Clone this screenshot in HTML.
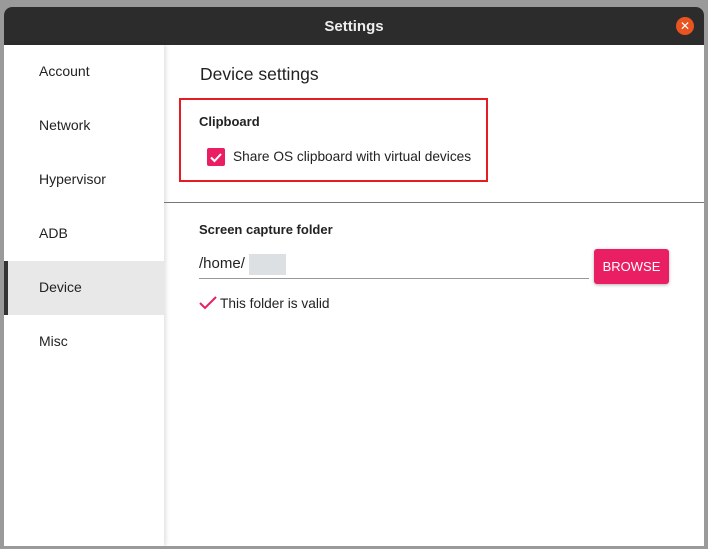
<!DOCTYPE html>
<html><head><style>
*{margin:0;padding:0;box-sizing:border-box}
body{width:708px;height:549px;background:#9a9a9a;font-family:"Liberation Sans",sans-serif;position:relative;overflow:hidden}
.win{position:absolute;left:4px;top:7px;width:700px;height:539px;background:#fff;border-radius:8px 8px 0 0;overflow:hidden}
.tb{position:absolute;left:0;top:0;width:700px;height:38px;background:#2c2c2c;color:#eee;font-weight:bold;font-size:15px;text-align:center;line-height:40px}
.x{position:absolute;left:672px;top:10px;width:18px;height:18px;border-radius:50%;background:#e95420;color:#fff;font-size:12px;line-height:18px;text-align:center;font-weight:normal}
.side{position:absolute;left:0;top:38px;width:160px;height:501px;background:#fff;box-shadow:2px 0 4px rgba(0,0,0,.12)}
.it{position:absolute;left:0;width:160px;height:54px;line-height:52px;padding-left:35px;font-size:14px;color:#222}
.sel{background:#e8e8e8;border-left:4px solid #333;padding-left:31px}
.t{position:absolute;font-size:13.7px;color:#222}
.b{font-weight:bold;font-size:13px}
</style></head><body>
<div class="win">
<div class="tb">Settings<div class="x">✕</div></div>
<div class="side">
<div class="it" style="top:0">Account</div>
<div class="it" style="top:54px">Network</div>
<div class="it" style="top:108px">Hypervisor</div>
<div class="it" style="top:162px">ADB</div>
<div class="it sel" style="top:216px">Device</div>
<div class="it" style="top:270px">Misc</div>
</div>
<div class="t" style="left:196px;top:57px;font-size:17.5px">Device settings</div>
<div style="position:absolute;left:175px;top:91px;width:309px;height:84px;border:2px solid #e51c23"></div>
<div class="t b" style="left:195px;top:107px">Clipboard</div>
<div style="position:absolute;left:203px;top:141px;width:18px;height:18px;background:#e91e63;border-radius:2px"><svg width="18" height="18"><path d="M4 9.5l3.5 3.5 6.5-7" stroke="#fff" stroke-width="2" fill="none"/></svg></div>
<div class="t" style="left:229px;top:142px">Share OS clipboard with virtual devices</div>
<div style="position:absolute;left:160px;top:195px;width:540px;height:1px;background:#777"></div>
<div class="t b" style="left:195px;top:215px">Screen capture folder</div>
<div class="t" style="left:195px;top:248px;font-size:15px">/home/</div>
<div style="position:absolute;left:245px;top:247px;width:37px;height:21px;background:#dde0e3"></div>
<div style="position:absolute;left:195px;top:271px;width:390px;height:1px;background:#999"></div>
<div style="position:absolute;left:590px;top:242px;width:75px;height:35px;background:#e91e63;border-radius:3px;color:#fff;font-size:13px;text-align:center;line-height:35px;box-shadow:0 1px 3px rgba(0,0,0,.3)">BROWSE</div>
<svg style="position:absolute;left:195px;top:289px" width="18" height="14"><path d="M1 7l5 5 11-11" stroke="#e91e63" stroke-width="2" fill="none"/></svg>
<div class="t" style="left:216px;top:289px">This folder is valid</div>
</div>
</body></html>
